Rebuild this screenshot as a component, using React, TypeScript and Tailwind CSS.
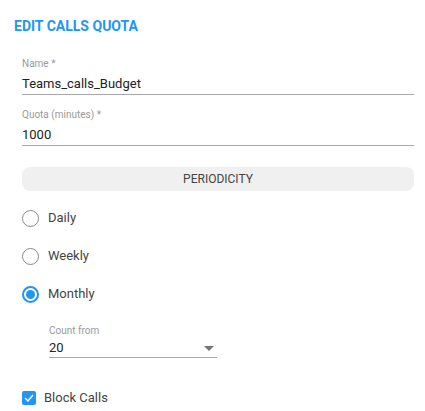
import { useState } from "react";

const periods = ["Daily", "Weekly", "Monthly"];

function TextField({ label, value }: { label: string; value: string }) {
  return (
    <div className="flex flex-col">
      <label className="text-[10px] leading-[12px] text-[#9a9a9a]">{label}</label>
      <div className="mt-[5px] h-[20px] border-b border-[#a8a8a8] text-[13px] leading-[18px] text-[#222]">
        {value}
      </div>
    </div>
  );
}

export default function App() {
  const [period, setPeriod] = useState("Monthly");
  const [block, setBlock] = useState(true);

  return (
    <div className="min-h-screen bg-white font-['Roboto',sans-serif] text-[#333]">
      <div className="pt-[18px] pl-[14px]">
        <h2 className="text-[14px] leading-[17px] font-bold text-[#2196f3]">EDIT CALLS QUOTA</h2>
      </div>

      <div className="mt-[23px] flex w-[414px] flex-col pl-[22px]">
        {/* Name + quota fields */}
        <TextField label="Name *" value="Teams_calls_Budget" />
        <div className="mt-[14px]">
          <TextField label="Quota (minutes) *" value="1000" />
        </div>

        {/* Periodicity header */}
        <div className="mt-[21px] flex h-[24px] items-center justify-center rounded-[8px] bg-[#f0f0f0] text-[12px] text-[#444]">
          PERIODICITY
        </div>

        {/* Radio group */}
        <div className="mt-[19px] flex flex-col gap-[22px]">
          {periods.map((p) => (
            <label key={p} className="flex h-[16px] cursor-pointer items-center gap-[9px]">
              <input type="radio" className="hidden" checked={period === p} onChange={() => setPeriod(p)} />
              {period === p ? (
                <span className="flex h-[17px] w-[17px] items-center justify-center rounded-full border-2 border-[#2196f3]">
                  <span className="h-[9px] w-[9px] rounded-full bg-[#2196f3]" />
                </span>
              ) : (
                <span className="h-[17px] w-[17px] rounded-full border-[1.5px] border-[#8a8a8a]" />
              )}
              <span className="text-[13px] text-[#444]">{p}</span>
            </label>
          ))}
        </div>

        {/* Count from select */}
        <div className="mt-[23px] ml-[27px] flex w-[168px] flex-col">
          <label className="text-[10px] leading-[12px] text-[#9a9a9a]">Count from</label>
          <div className="mt-[2px] flex h-[19px] items-center justify-between border-b border-[#a8a8a8] text-[13px] text-[#222]">
            <span className="leading-[16px]">20</span>
            <svg width="10" height="5" viewBox="0 0 10 5" className="mr-[3px]">
              <path d="M0 0 L10 0 L5 5 Z" fill="#757575" />
            </svg>
          </div>
        </div>

        {/* Block calls checkbox */}
        <label className="mt-[30px] flex cursor-pointer items-center gap-[8px]" onClick={() => setBlock(!block)}>
          <span
            className={
              block
                ? "flex h-[14px] w-[14px] items-center justify-center rounded-[2px] bg-[#2196f3]"
                : "h-[14px] w-[14px] rounded-[2px] border-2 border-[#777]"
            }
          >
            {block && (
              <svg width="10" height="8" viewBox="0 0 10 8">
                <path d="M1 4 L4 7 L9 1" fill="none" stroke="white" strokeWidth="1.4" />
              </svg>
            )}
          </span>
          <span className="text-[13px] text-[#444]">Block Calls</span>
        </label>
      </div>
    </div>
  );
}
